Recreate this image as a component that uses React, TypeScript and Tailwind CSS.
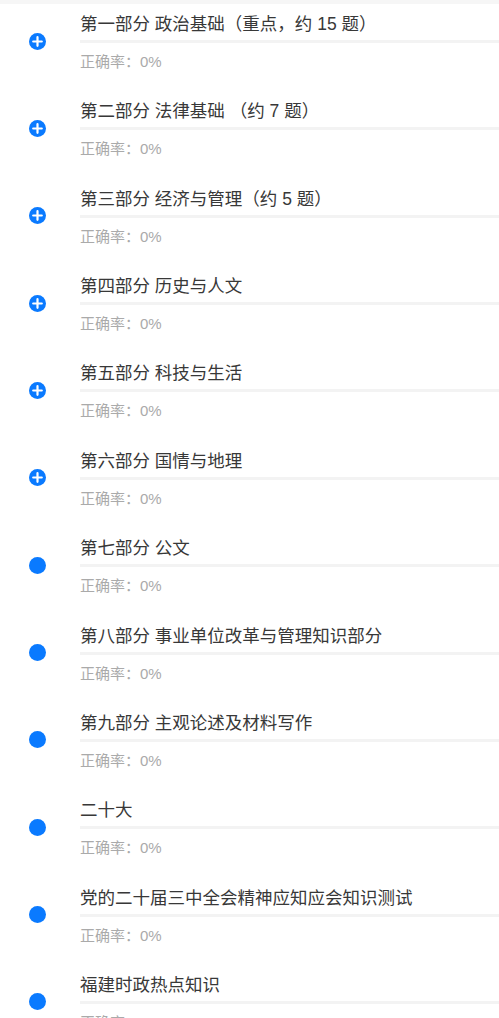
import React from "react";

const items: { title: string; plus: boolean }[] = [
  { title: "第一部分 政治基础（重点，约 15 题）", plus: true },
  { title: "第二部分 法律基础 （约 7 题）", plus: true },
  { title: "第三部分 经济与管理（约 5 题）", plus: true },
  { title: "第四部分 历史与人文", plus: true },
  { title: "第五部分 科技与生活", plus: true },
  { title: "第六部分 国情与地理", plus: true },
  { title: "第七部分 公文", plus: false },
  { title: "第八部分 事业单位改革与管理知识部分", plus: false },
  { title: "第九部分 主观论述及材料写作", plus: false },
  { title: "二十大", plus: false },
  { title: "党的二十届三中全会精神应知应会知识测试", plus: false },
  { title: "福建时政热点知识", plus: false },
];

function Icon({ plus }: { plus: boolean }) {
  return (
    <svg width="17" height="17" viewBox="0 0 17 17">
      <circle cx="8.5" cy="8.5" r="8.5" fill="#0a7aff" />
      {plus && (
        <path d="M8.5 4.2V12.8M4.2 8.5H12.8" stroke="#fff" strokeWidth="2.2" strokeLinecap="round" />
      )}
    </svg>
  );
}

export default function App() {
  return (
    <div
      className="w-[499px] h-[1018px] overflow-hidden bg-white"
      style={{ fontFamily: '"Liberation Sans", "Noto Sans CJK SC", sans-serif' }}
    >
      <div className="h-[4px] bg-[#f6f6f6]" />
      {items.map((it, i) => (
        <div key={i} className="flex h-[87.36px]">
          <div className="w-[80px] shrink-0 pl-[29px] pt-[28.5px]">
            <Icon plus={it.plus} />
          </div>
          <div className="flex-1 pt-[8px]">
            <div className="text-[17.5px] leading-[24px] text-[#383838] whitespace-nowrap">{it.title}</div>
            <div className="mt-[4px] h-[3px] bg-[#f3f3f3]" />
            <div className="mt-[9px] text-[15px] leading-[20px] text-[#aaaaaa]">正确率：0%</div>
          </div>
        </div>
      ))}
    </div>
  );
}
